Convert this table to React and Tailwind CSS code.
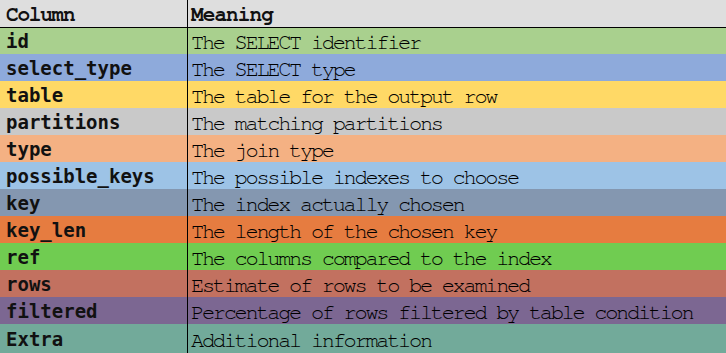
const rows = [
  ["id", "The SELECT identifier", "bg-[#a9d08e]", "h-[26px]"],
  ["select_type", "The SELECT type", "bg-[#8eaadb]", "h-[27px]"],
  ["table", "The table for the output row", "bg-[#ffd966]", "h-[27px]"],
  ["partitions", "The matching partitions", "bg-[#c9c9c9]", "h-[27px]"],
  ["type", "The join type", "bg-[#f4b183]", "h-[27px]"],
  ["possible_keys", "The possible indexes to choose", "bg-[#9dc3e6]", "h-[27px]"],
  ["key", "The index actually chosen", "bg-[#8497b0]", "h-[27px]"],
  ["key_len", "The length of the chosen key", "bg-[#e67c40]", "h-[27px]"],
  ["ref", "The columns compared to the index", "bg-[#70cc51]", "h-[27px]"],
  ["rows", "Estimate of rows to be examined", "bg-[#c27160]", "h-[27px]"],
  ["filtered", "Percentage of rows filtered by table condition", "bg-[#7c6792]", "h-[27px]"],
  ["Extra", "Additional information", "bg-[#72aa9a]", "h-[29px]"],
];

export default function App() {
  return (
    <div className="w-[726px] h-[353px] overflow-hidden bg-white text-[#111]">
      <div className="flex h-[27px] bg-[#dedede]">
        <div className="w-[188px] shrink-0 pl-[6px] pt-[2px] flex items-center font-['Nimbus_Mono_PS','FreeMono','Courier_New','Liberation_Mono',monospace] font-bold text-[21px] tracking-[-1.2px] leading-none border-r border-black">
          Column
        </div>
        <div className="flex-1 pl-[3px] pt-[2px] flex items-center font-['Nimbus_Mono_PS','FreeMono','Courier_New','Liberation_Mono',monospace] font-bold text-[21px] tracking-[-0.9px] leading-none">
          Meaning
        </div>
      </div>
      <div className="h-px bg-black" />
      {rows.map(([k, v, bg, h]) => (
        <div key={k} className={`flex ${bg} ${h}`}>
          <div className="w-[188px] shrink-0 pl-[6px] pt-[1px] flex items-center border-r border-black font-['DejaVu_Sans_Mono',monospace] font-bold text-[19px] leading-none">
            {k}
          </div>
          <div className="flex-1 pl-[3px] pt-[2px] flex items-center font-['Nimbus_Mono_PS','FreeMono','Courier_New','Liberation_Mono',monospace] text-[22px] tracking-[-2.3px] leading-none whitespace-nowrap text-black">
            {v}
          </div>
        </div>
      ))}
    </div>
  );
}
